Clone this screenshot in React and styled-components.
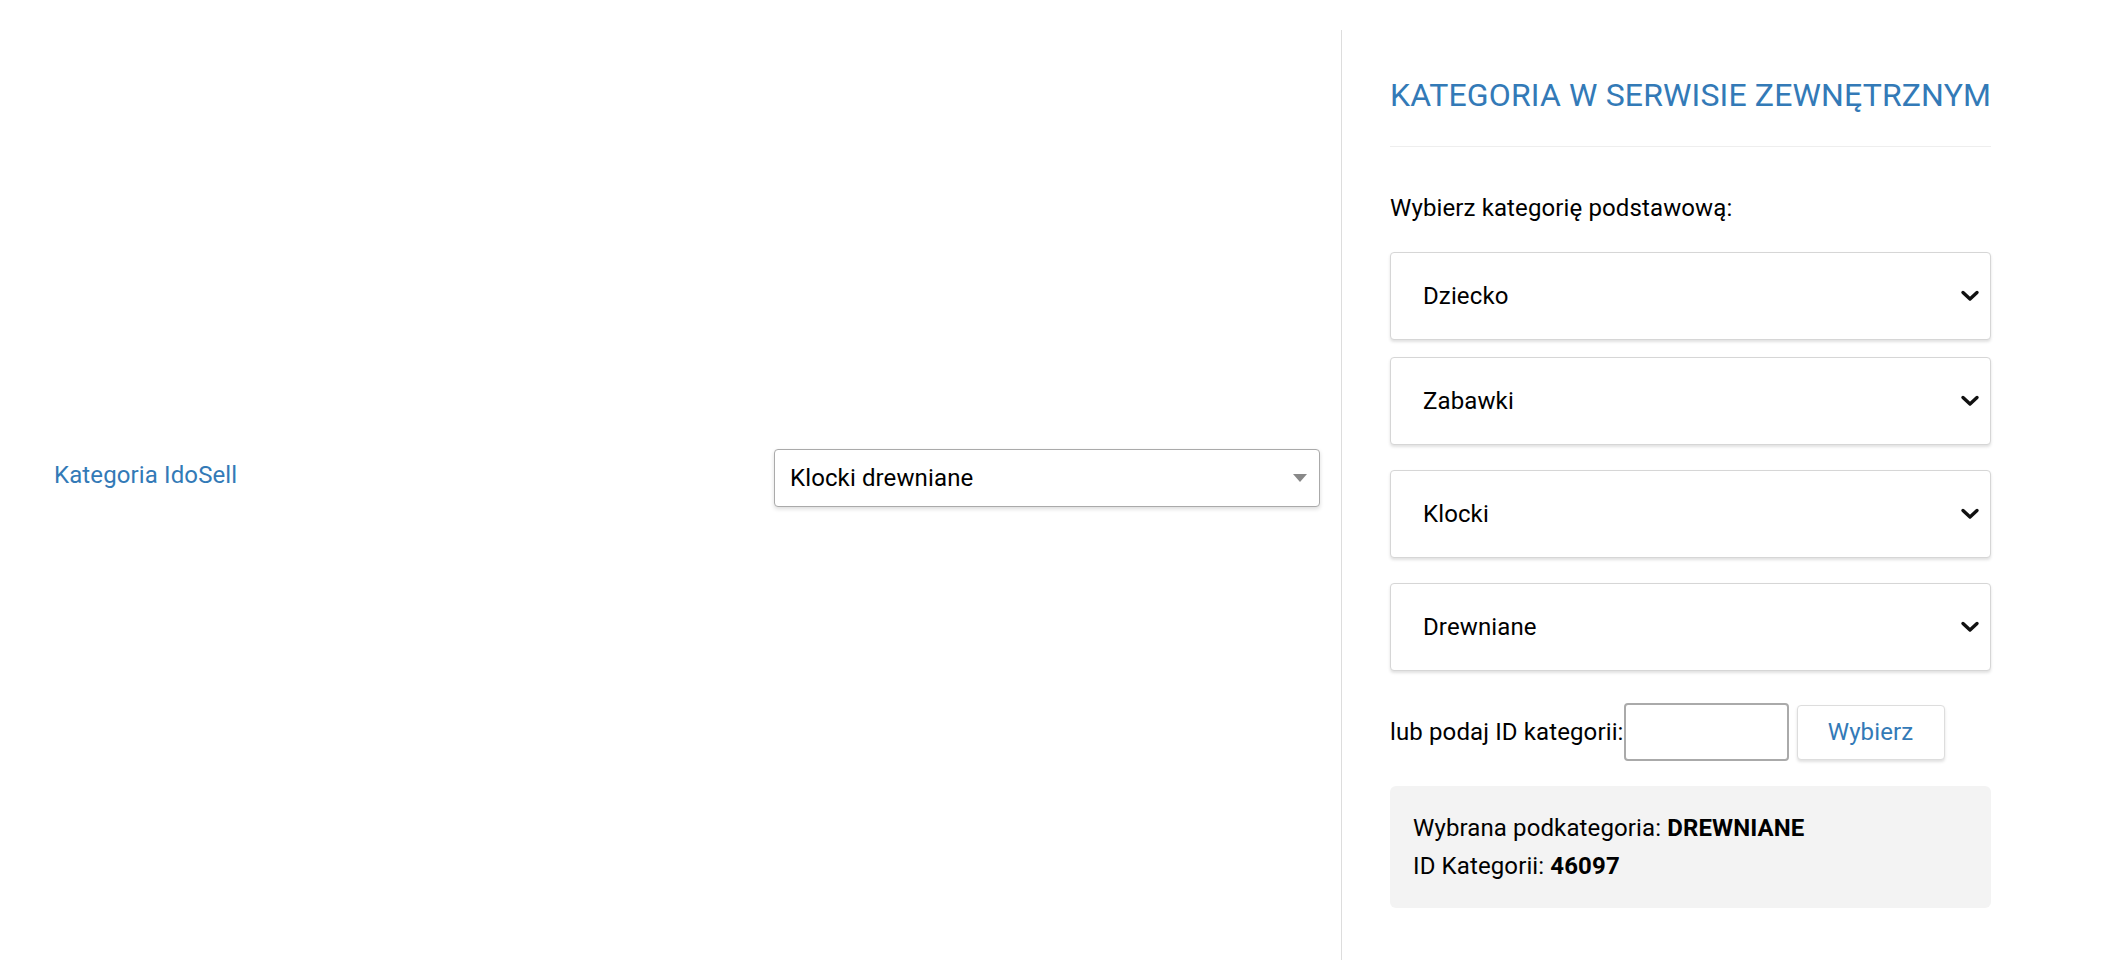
import React from "react";
import styled, { createGlobalStyle } from "styled-components";

const GlobalStyle = createGlobalStyle`
  html, body {
    margin: 0;
    padding: 0;
    background: #ffffff;
  }
  body {
    font-family: Roboto, "Liberation Sans", Arial, sans-serif;
    color: #000;
    letter-spacing: 0.12px;
  }
  * { box-sizing: border-box; }
`;

const BLUE = "#337ab7";

const Page = styled.div`
  display: flex;
  height: 960px;
  padding-top: 30px;
`;

const LeftPane = styled.div`
  width: 1341px;
  flex: none;
  display: flex;
  align-items: center;
  padding: 0 21px 35px 54px;
`;

const FieldRow = styled.div`
  flex: 1;
  display: flex;
  align-items: center;
  justify-content: space-between;
`;

const FieldLabel = styled.span`
  font-size: 24px;
  line-height: 28px;
  color: ${BLUE};
  padding-bottom: 5px;
`;

const ComboBox = styled.div`
  position: relative;
  width: 546px;
  height: 58px;
  display: flex;
  align-items: center;
  padding-left: 15px;
  border: 1.5px solid #aaaaaa;
  border-radius: 4px;
  background: #fff;
  box-shadow: 0 2px 4px rgba(0, 0, 0, 0.14);
  font-size: 24px;
  color: #000;
`;

const ComboArrow = styled.span`
  position: absolute;
  right: 12px;
  top: 50%;
  margin-top: -4px;
  width: 0;
  height: 0;
  border-left: 7px solid transparent;
  border-right: 7px solid transparent;
  border-top: 8px solid #888888;
`;

const RightPane = styled.div`
  width: 649px;
  flex: none;
  border-left: 1px solid #dddddd;
  padding: 46px 0 0 48px;
  display: flex;
  flex-direction: column;
`;

const Heading = styled.h2`
  margin: 0;
  font-size: 32px;
  line-height: 38px;
  font-weight: 400;
  letter-spacing: 0.15px;
  color: ${BLUE};
  text-transform: uppercase;
  white-space: nowrap;
`;

const Rule = styled.div`
  width: 601px;
  height: 1px;
  margin-top: 32px;
  background: #eeeeee;
`;

const SubLabel = styled.div`
  margin-top: 47px;
  font-size: 24px;
  line-height: 28px;
`;

const CategorySelect = styled.div`
  position: relative;
  width: 601px;
  height: 88px;
  margin-top: ${(p) => p.$mt}px;
  display: flex;
  align-items: center;
  padding-left: 32px;
  border: 1.5px solid #d6d6d6;
  border-radius: 4px;
  background: #fff;
  box-shadow: 0 2px 3px rgba(0, 0, 0, 0.12);
  font-size: 24px;
`;

const Chevron = styled.svg`
  position: absolute;
  right: 10px;
  top: 50%;
  margin-top: -6px;
`;

const IdRow = styled.div`
  margin-top: 32px;
  display: flex;
  align-items: center;
`;

const IdLabel = styled.span`
  font-size: 24px;
  line-height: 28px;
  white-space: nowrap;
`;

const IdInput = styled.input`
  width: 165px;
  height: 58px;
  border: 2px solid #aaaaaa;
  border-radius: 4px;
  font-size: 24px;
  font-family: inherit;
  padding: 0 8px;
  outline: none;
`;

const PickButton = styled.button`
  margin-left: 8px;
  width: 148px;
  height: 55px;
  border: 1px solid #dddddd;
  border-radius: 4px;
  background: #fff;
  box-shadow: 0 2px 3px rgba(0, 0, 0, 0.12);
  color: ${BLUE};
  font-family: inherit;
  font-size: 24px;
  letter-spacing: inherit;
  cursor: pointer;
`;

const Summary = styled.div`
  margin-top: 25px;
  width: 601px;
  padding: 23px 23px;
  background: #f3f3f3;
  border-radius: 6px;
`;

const SummaryLine = styled.div`
  font-size: 24px;
  line-height: 38px;
  b { font-weight: 700; }
`;

const SelectChevron = () => (
  <Chevron width="20" height="12" viewBox="0 0 20 12">
    <path
      d="M3 2.5 L10 9 L17 2.5"
      fill="none"
      stroke="#111"
      strokeWidth="3.4"
      strokeLinecap="round"
      strokeLinejoin="round"
    />
  </Chevron>
);

const categories = [
  { label: "Dziecko", mt: 30 },
  { label: "Zabawki", mt: 17 },
  { label: "Klocki", mt: 25 },
  { label: "Drewniane", mt: 25 },
];

export default function App() {
  return (
    <>
      <GlobalStyle />
      <Page>
        <LeftPane>
          <FieldRow>
            <FieldLabel>Kategoria IdoSell</FieldLabel>
            <ComboBox>
              Klocki drewniane
              <ComboArrow />
            </ComboBox>
          </FieldRow>
        </LeftPane>
        <RightPane>
          <Heading>Kategoria w serwisie zewnętrznym</Heading>
          <Rule />
          <SubLabel>Wybierz kategorię podstawową:</SubLabel>
          {categories.map((c) => (
            <CategorySelect key={c.label} $mt={c.mt}>
              {c.label}
              <SelectChevron />
            </CategorySelect>
          ))}
          <IdRow>
            <IdLabel>lub podaj ID kategorii:</IdLabel>
            <IdInput type="text" />
            <PickButton type="button">Wybierz</PickButton>
          </IdRow>
          <Summary>
            <SummaryLine>
              Wybrana podkategoria: <b>DREWNIANE</b>
            </SummaryLine>
            <SummaryLine>
              ID Kategorii: <b>46097</b>
            </SummaryLine>
          </Summary>
        </RightPane>
      </Page>
    </>
  );
}
